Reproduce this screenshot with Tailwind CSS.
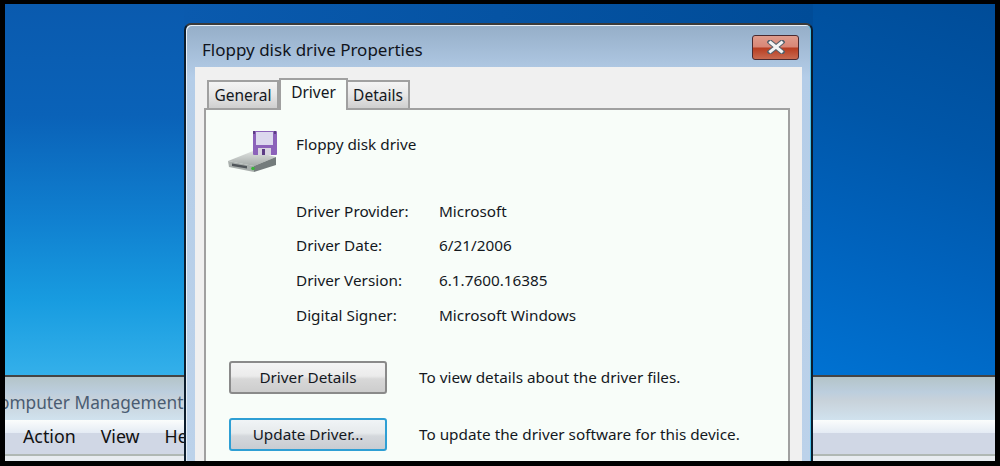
<!DOCTYPE html>
<html lang="en">
<head>
    <meta charset="UTF-8">
    <title>Floppy disk drive Properties</title>
    <script src="https://cdn.jsdelivr.net/npm/@tailwindcss/browser@4"></script>
</head>
<body class="bg-black">
    <div class="relative w-[1000px] h-[466px] overflow-hidden bg-black font-['Noto_Sans',sans-serif] text-[#1a1a1a]">
        <!-- desktop -->
        <div class="absolute left-[5px] top-[4px] w-[990px] h-[372px] flex">
            <div class="w-[179px] bg-[linear-gradient(180deg,#0a5aae_0%,#0a62b8_30%,#1080d0_58%,#189ce0_80%,#34b0ea_100%)]"></div>
            <div class="flex-1 bg-[linear-gradient(90deg,#0a5aae,#004c98)]"></div>
            <div class="w-[182px] bg-[linear-gradient(200deg,#004c98_0%,#0056a8_35%,#0062bc_65%,#0072d2_100%)]"></div>
        </div>

        <!-- computer management window behind -->
        <div class="absolute left-[5px] top-[375px] w-[990px] h-[86px] border-t-2 border-[#444] flex flex-col">
            <div class="h-[43px] bg-[linear-gradient(180deg,#b4c4c8_0%,#bccede_35%,#c8d2da_55%,#d0e2ee_100%)] flex items-center pt-[9px] text-[17.3px] leading-[24px] text-[#4a5c72] whitespace-nowrap overflow-hidden">
                <span class="ml-[-17px]">Computer Management</span>
            </div>
            <div class="h-[13px] bg-[linear-gradient(180deg,#fbfdfc,#e4ebf4)]"></div>
            <div class="flex-1 bg-[#d0d7e5] relative">
                <div class="absolute left-0 right-0 top-[-14px] h-[34px] flex items-center gap-[25px] pl-[18px] text-[17.8px] text-[#111]">
                    <span>Action</span><span>View</span><span>Help</span>
                </div>
                <div class="absolute left-0 right-0 bottom-0 h-[7px] border-t-2 border-[#b0b8b4] bg-[#e8ecf0]"></div>
            </div>
        </div>

        <!-- dialog -->
        <div class="absolute left-[184px] top-[23px] w-[629px] h-[438px] rounded-t-[7px] border-x-2 border-t-2 border-x-[#0c1c2c] border-t-[#3a3a3a] bg-[linear-gradient(180deg,#95aec8_0%,#b4cde8_12%,#bcd2ea_100%)] shadow-[inset_1px_1px_0_#e8f0f8,inset_-1px_0_0_#4cc0ea] flex flex-col px-[9px]">
            <div class="h-[42px] flex items-center justify-between shrink-0">
                <span class="ml-[7px] mt-[8px] text-[17px] text-[#10141c]">Floppy disk drive Properties</span>
                <div class="mr-[3px] mt-[2px] w-[47px] h-[25px] rounded-[3px] border border-[#4a2a30] bg-[linear-gradient(180deg,#e09c8c_0%,#d88676_48%,#b83c20_52%,#c86a50_100%)] flex items-center justify-center">
                    <svg class="w-[18px] h-[14px]" viewBox="0 0 18 14">
                        <path d="M3 2 L15 12 M15 2 L3 12" stroke="#55606a" stroke-width="5" stroke-linecap="square"/>
                        <path d="M3.5 2.5 L14.5 11.5 M14.5 2.5 L3.5 11.5" stroke="#f4f4f4" stroke-width="3" stroke-linecap="square"/>
                    </svg>
                </div>
            </div>

            <div class="flex-1 bg-[#f0f0f0] pl-[9px] pr-[12px] flex flex-col">
                <!-- tabs -->
                <div class="relative z-10 flex items-end h-[41px] pl-[3px] shrink-0 text-[15.5px] text-[#14181e]">
                    <div class="w-[72px] h-[28px] border-2 border-b-0 border-[#a0a0a0] bg-[linear-gradient(180deg,#f4f4f4_0%,#e8e8e8_45%,#cfcfcf_100%)] flex items-center justify-center pt-[2px]">General</div>
                    <div class="w-[69px] h-[32px] border-2 border-b-0 border-[#a0a0a0] bg-[#f8fdf9] flex items-center justify-center mb-[-2px] pb-[5px]">Driver</div>
                    <div class="w-[62px] h-[28px] border-2 border-b-0 border-l-0 border-[#a0a0a0] bg-[linear-gradient(180deg,#f4f4f4_0%,#e8e8e8_45%,#cfcfcf_100%)] flex items-center justify-center pt-[2px]">Details</div>
                </div>

                <!-- tab pane -->
                <div class="flex-1 border-2 border-b-0 border-[#a0a0a0] bg-[#f8fdf9] pl-[23px] pt-[18px] text-[15.3px] text-[#14181e]">
                    <div class="flex items-start h-[48px]">
                        <svg class="w-[52px] h-[48px] -ml-[2px] mt-[1px] shrink-0 blur-[0.4px]" viewBox="0 0 52 48">
                            <defs>
                                <linearGradient id="drive" x1="0" y1="0" x2="0" y2="1">
                                    <stop offset="0" stop-color="#dfe2e0"/>
                                    <stop offset="1" stop-color="#a4aaa8"/>
                                </linearGradient>
                            </defs>
                            <path d="M1 32 L26 22 L49 28 L27 37 Z" fill="url(#drive)"/>
                            <path d="M1 32 L27 37 L27 43 L2 38 Z" fill="#a8aeac"/>
                            <path d="M27 37 L49 28 L49 36 L27 43 Z" fill="#747c7c"/>
                            <path d="M5 34.5 L20 37 L20 39.5 L5 37 Z" fill="#50565a"/>
                            <rect x="26" y="2" width="24" height="24" rx="1" fill="#8c62ba"/>
                            <rect x="29" y="3" width="17" height="13" fill="#dcd8ee"/>
                            <rect x="31" y="19" width="13" height="7" fill="#d8d4e0"/>
                            <rect x="35" y="20" width="3" height="6" fill="#5c3c84"/>
                            <rect x="26" y="2" width="2" height="3" fill="#5c3c84"/>
                            <rect x="47" y="2" width="2" height="3" fill="#5c3c84"/>
                            <circle cx="26" cy="39.5" r="1.8" fill="#38b438"/>
                        </svg>
                        <span class="ml-[17px] mt-[5px]">Floppy disk drive</span>
                    </div>
                    <div class="ml-[67px] mt-[18px] grid grid-cols-[143px_1fr] auto-rows-[34.6px] items-center">
                        <span>Driver Provider:</span><span>Microsoft</span>
                        <span>Driver Date:</span><span>6/21/2006</span>
                        <span>Driver Version:</span><span>6.1.7600.16385</span>
                        <span>Digital Signer:</span><span>Microsoft Windows</span>
                    </div>
                    <div class="mt-[29px] flex items-center h-[33px]">
                        <div class="w-[158px] h-[33px] rounded-[3px] border-2 border-[#8a8a8a] bg-[linear-gradient(180deg,#f4f4f4_0%,#ebebeb_45%,#d8d8d8_55%,#cdcdcd_100%)] flex items-center justify-center">Driver Details</div>
                        <span class="ml-[32px]">To view details about the driver files.</span>
                    </div>
                    <div class="mt-[24px] flex items-center h-[33px]">
                        <div class="w-[158px] h-[33px] rounded-[3px] border-2 border-[#2e9fd4] bg-[linear-gradient(180deg,#f0f4f6_0%,#e6eaec_45%,#d4d8dc_55%,#c8ccd2_100%)] flex items-center justify-center">Update Driver...</div>
                        <span class="ml-[32px]">To update the driver software for this device.</span>
                    </div>
                </div>
            </div>
        </div>
    </div>
</body>
</html>
